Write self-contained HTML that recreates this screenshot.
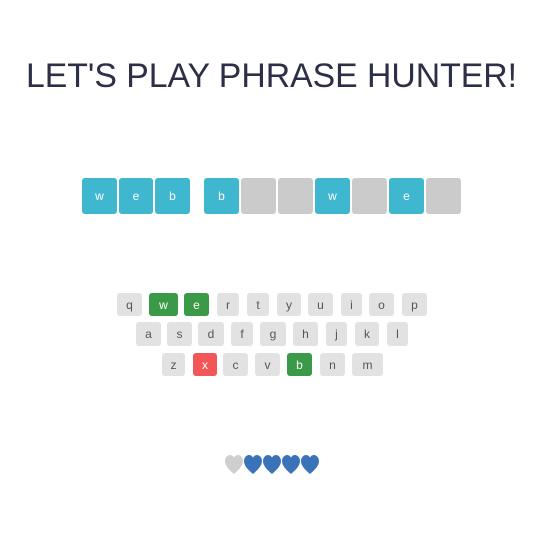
<!DOCTYPE html>
<html><head><style>
html,body{margin:0;padding:0;background:#fff;width:550px;height:550px;overflow:hidden;position:relative;font-family:"Liberation Sans",sans-serif}
.b{position:absolute;top:178px;height:36px;border-radius:3px;background:#3fb7cf;color:#fff;font-size:12px;display:flex;align-items:center;justify-content:center}
.g{background:#cbcbcb}
.k{position:absolute;border-radius:3px;background:#e2e2e2;color:#555;font-size:12px;display:flex;align-items:center;justify-content:center}
.gr{background:#3a9a47;color:#fff}
.rd{background:#f25656;color:#fff}
</style></head><body>
<svg style="position:absolute;left:0;top:0" width="550" height="120">
<text x="26" y="87" textLength="491" lengthAdjust="spacingAndGlyphs" font-family="Liberation Sans" font-size="34" fill="#2c2f45">LET'S PLAY PHRASE HUNTER!</text>
</svg>
<div class="b" style="left:82px;width:35px">w</div>
<div class="b" style="left:119px;width:34px">e</div>
<div class="b" style="left:155px;width:35px">b</div>
<div class="b" style="left:204px;width:35px">b</div>
<div class="b g" style="left:241px;width:35px"></div>
<div class="b g" style="left:278px;width:35px"></div>
<div class="b" style="left:315px;width:35px">w</div>
<div class="b g" style="left:352px;width:35px"></div>
<div class="b" style="left:389px;width:35px">e</div>
<div class="b g" style="left:426px;width:35px"></div>

<div class="k" style="left:117px;top:293px;width:25px;height:23px">q</div>
<div class="k gr" style="left:149px;top:293px;width:29px;height:23px">w</div>
<div class="k gr" style="left:184px;top:293px;width:25px;height:23px">e</div>
<div class="k" style="left:217px;top:293px;width:22px;height:23px">r</div>
<div class="k" style="left:247px;top:293px;width:22px;height:23px">t</div>
<div class="k" style="left:277px;top:293px;width:24px;height:23px">y</div>
<div class="k" style="left:308px;top:293px;width:25px;height:23px">u</div>
<div class="k" style="left:341px;top:293px;width:21px;height:23px">i</div>
<div class="k" style="left:369px;top:293px;width:25px;height:23px">o</div>
<div class="k" style="left:402px;top:293px;width:25px;height:23px">p</div>

<div class="k" style="left:136px;top:322px;width:25px;height:24px">a</div>
<div class="k" style="left:167px;top:322px;width:25px;height:24px">s</div>
<div class="k" style="left:198px;top:322px;width:26px;height:24px">d</div>
<div class="k" style="left:231px;top:322px;width:22px;height:24px">f</div>
<div class="k" style="left:260px;top:322px;width:26px;height:24px">g</div>
<div class="k" style="left:293px;top:322px;width:25px;height:24px">h</div>
<div class="k" style="left:326px;top:322px;width:21px;height:24px">j</div>
<div class="k" style="left:355px;top:322px;width:24px;height:24px">k</div>
<div class="k" style="left:387px;top:322px;width:21px;height:24px">l</div>

<div class="k" style="left:162px;top:353px;width:23px;height:23px">z</div>
<div class="k rd" style="left:193px;top:353px;width:24px;height:23px">x</div>
<div class="k" style="left:223px;top:353px;width:25px;height:23px">c</div>
<div class="k" style="left:255px;top:353px;width:25px;height:23px">v</div>
<div class="k gr" style="left:287px;top:353px;width:25px;height:23px">b</div>
<div class="k" style="left:320px;top:353px;width:25px;height:23px">n</div>
<div class="k" style="left:352px;top:353px;width:31px;height:23px">m</div>

<svg style="position:absolute;left:225px;top:454px" width="96" height="22" viewBox="0 0 96 22">
<defs><path id="h" d="M9 19 C7 17 0 12 0 6 C0 2.5 2.5 0 5 0 C7 0 8.3 1.3 9 2.6 C9.7 1.3 11 0 13 0 C15.5 0 18 2.5 18 6 C18 12 11 17 9 19Z"/></defs>
<use href="#h" x="0" y="1" fill="#cfcfcf"/>
<use href="#h" x="19" y="1" fill="#3b73b9"/>
<use href="#h" x="38" y="1" fill="#3b73b9"/>
<use href="#h" x="57" y="1" fill="#3b73b9"/>
<use href="#h" x="76" y="1" fill="#3b73b9"/>
</svg>
</body></html>
